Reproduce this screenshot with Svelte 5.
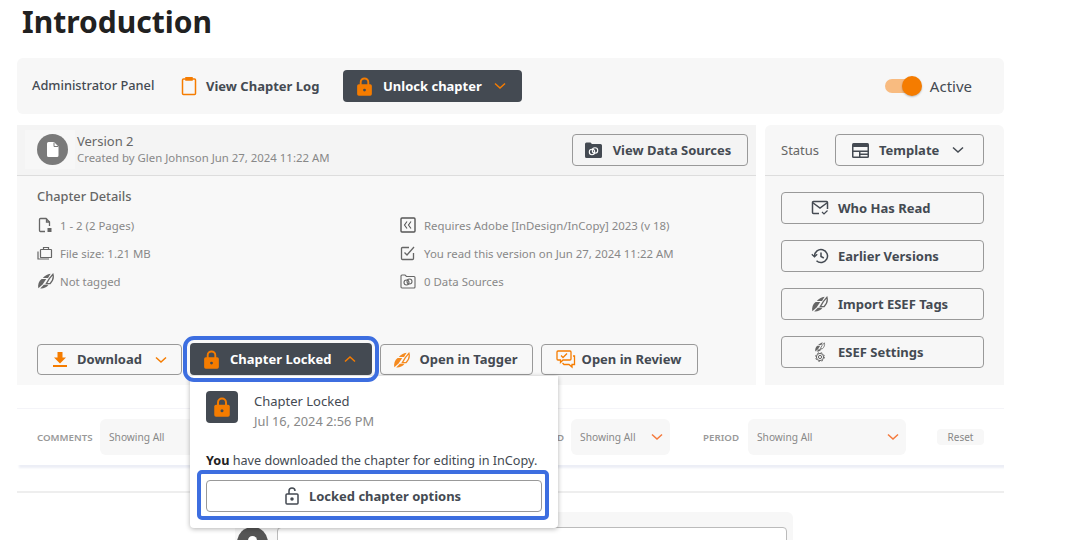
<script>
  const detailsLeft = [
    { icon: 'pages', text: '1 - 2 (2 Pages)' },
    { icon: 'size', text: 'File size: 1.21 MB' },
    { icon: 'tag', text: 'Not tagged' }
  ];
  const detailsRight = [
    { icon: 'adobe', text: 'Requires Adobe [InDesign/InCopy] 2023 (v 18)' },
    { icon: 'check', text: 'You read this version on Jun 27, 2024 11:22 AM' },
    { icon: 'folder', text: '0 Data Sources' }
  ];
  const sideActions = [
    { icon: 'mail', text: 'Who Has Read' },
    { icon: 'history', text: 'Earlier Versions' },
    { icon: 'tag', text: 'Import ESEF Tags' },
    { icon: 'esef', text: 'ESEF Settings' }
  ];
</script>

{#snippet lock(size)}
  <svg width={size} height={size} viewBox="0 0 16 16" class="lock-icon">
    <path d="M4.800 7V4.400a3.200 3.200 0 0 1 6.400 0V7" fill="none" stroke="#f57c00" stroke-width="1.600" />
    <rect x="1.800" y="6.200" width="12.400" height="9.600" rx="1.400" fill="#f57c00" />
    <circle cx="8" cy="11" r="1.200" fill="#444a52" />
  </svg>
{/snippet}

{#snippet chevron(up, color)}
  <svg width="12" height="8" viewBox="0 0 12 8" class="chevron">
    <path d={up ? 'M1 6.500L6 2l5 4.500' : 'M1 1.500L6 6l5-4.500'} fill="none" stroke={color} stroke-width="1.500" />
  </svg>
{/snippet}

{#snippet leaf(color)}
  <path d="M5.800 5C7.500 2.800 10.500 1.300 13.600.8L11 5z" fill={color} />
  <path d="M1.300 15.200C.6 11.500 1.800 8 4.600 6h4.600L5.600 11.600z" fill={color} />
  <path d="M3.200 15.400c3 .3 6.400-.8 8.300-3.700L6.800 11.800z" fill={color} />
  <path d="M12.300 5.600L15.900 1.300C16.900 4.800 15.800 8 13 10.700H9.300z" fill="none" stroke={color} stroke-width="1.300" />
{/snippet}

{#snippet tagIcon(color)}
  <svg width="18" height="16" viewBox="0 0 18 16">
    {@render leaf(color)}
  </svg>
{/snippet}

{#snippet icon(name)}
  {#if name === 'pages'}
    <svg width="16" height="16" viewBox="0 0 16 16" fill="none" stroke="#666" stroke-width="1.300">
      <path d="M8 14.500H3.500a1 1 0 0 1-1-1V2.500a1 1 0 0 1 1-1h5.500l3.500 3.500V9" />
      <path d="M9.500 1.500v3.500h3" />
      <path d="M10.500 11h4v4h-4z" fill="#666" stroke="none" />
    </svg>
  {:else if name === 'size'}
    <svg width="16" height="16" viewBox="0 0 16 16" fill="none" stroke="#666" stroke-width="1.200">
      <rect x="3.500" y="4.500" width="11" height="8" rx=".6" />
      <path d="M6.500 4.500V2.500h5v2" />
      <path d="M1 6.500v7.500h11" />
    </svg>
  {:else if name === 'tag'}
    {@render tagIcon('#666')}
  {:else if name === 'adobe'}
    <svg width="16" height="16" viewBox="0 0 16 16" fill="none" stroke="#555" stroke-width="1.400">
      <rect x="1" y="1" width="14" height="14" rx="1" />
      <path d="M7 4.500L4.500 8 7 11.500M11 4.500L8.500 8 11 11.500" stroke-width="1.100" />
    </svg>
  {:else if name === 'check'}
    <svg width="16" height="16" viewBox="0 0 16 16" fill="none" stroke="#666" stroke-width="1.300">
      <path d="M13.500 8v5.500a1 1 0 0 1-1 1h-10a1 1 0 0 1-1-1v-10a1 1 0 0 1 1-1H9" />
      <path d="M4.500 7.500L7 10l7-8" />
    </svg>
  {:else if name === 'folder'}
    <svg width="16" height="16" viewBox="0 0 16 16" fill="none" stroke="#666" stroke-width="1.100">
      <path d="M1 3a1 1 0 0 1 1-1h3l1.500 1.500H14a1 1 0 0 1 1 1V14a1 1 0 0 1-1 1H2a1 1 0 0 1-1-1z" />
      <circle cx="6.500" cy="9.500" r="2.500" />
      <circle cx="9.500" cy="8.500" r="2.500" />
    </svg>
  {:else if name === 'mail'}
    <svg width="18" height="16" viewBox="0 0 18 16" fill="none" stroke="#444a52" stroke-width="1.500">
      <path d="M8 13.500H2.500a1 1 0 0 1-1-1v-10a1 1 0 0 1 1-1h13a1 1 0 0 1 1 1V9" />
      <path d="M1.500 2.500L9 8l7.500-5.500" />
      <path d="M11 12l2 2 3.500-3.500" stroke-width="1.200" />
    </svg>
  {:else if name === 'history'}
    <svg width="18" height="16" viewBox="0 0 18 16" fill="none" stroke="#444a52" stroke-width="1.500">
      <path d="M3.500 8a6.500 6.500 0 1 1 2 4.700" />
      <path d="M.8 6.200l2.700 2.600 2.700-2.600" stroke-width="1.300" />
      <path d="M10 4.500V8.500l2.800 1.500" />
    </svg>
  {:else if name === 'esef'}
    <svg width="18" height="20" viewBox="0 0 18 20" fill="none">
      <g transform="translate(3.500 0) scale(.62)">
        {@render leaf('#666')}
      </g>
      <circle cx="9" cy="15" r="1.600" stroke="#666" stroke-width="1" />
      <circle cx="9" cy="15" r="3.600" stroke="#666" stroke-width="1" />
      <circle cx="9" cy="15" r="4.400" stroke="#666" stroke-width="1" stroke-dasharray="1.600 1.900" />
    </svg>
  {/if}
{/snippet}

<main class="page">
  <h1>Introduction</h1>

  <section class="admin-bar">
    <span class="admin-label">Administrator Panel</span>
    <span class="log-link">
      <svg width="18" height="20" viewBox="0 0 18 20" fill="none" stroke="#f57c00" stroke-width="1.500">
        <rect x="2.500" y="3" width="13" height="15.500" rx="1" />
        <path d="M6 3V1.800h6V3v1H6z" fill="#f57c00" />
      </svg>
      View Chapter Log
    </span>
    <button class="btn dark unlock">
      {@render lock(19)}
      <span>Unlock chapter</span>
      {@render chevron(false, '#f57c00')}
    </button>
    <span class="toggle-wrap">
      <span class="toggle"><span class="knob"></span></span>
      <span class="active-label">Active</span>
    </span>
  </section>

  <div class="columns">
    <section class="chapter">
      <header class="version">
        <span class="avatar-wrap">
          <span class="avatar">
            <svg width="12" height="15" viewBox="0 0 12 15"><path d="M1.500 0H7l4.500 4.500V13.500a1.500 1.500 0 0 1-1.500 1.500H1.500A1.500 1.500 0 0 1 0 13.500V1.500A1.500 1.500 0 0 1 1.500 0z" fill="#fff" /><path d="M7 .5V4.500h4" fill="none" stroke="#7a7a7a" /></svg>
          </span>
        </span>
        <div class="version-text">
          <div class="version-name">Version 2</div>
          <div class="version-meta">Created by Glen Johnson Jun 27, 2024 11:22 AM</div>
        </div>
        <button class="btn outline sources">
          <svg width="17" height="16" viewBox="0 0 17 16">
            <path d="M0 2a1.500 1.500 0 0 1 1.500-1.500h4L7 2h8.500A1.500 1.500 0 0 1 17 3.500v11a1.500 1.500 0 0 1-1.500 1.500h-14A1.500 1.500 0 0 1 0 14.500z" fill="#444a52" />
            <circle cx="7" cy="10" r="2.700" fill="none" stroke="#fff" stroke-width="1.100" />
            <circle cx="10" cy="8.500" r="2.700" fill="none" stroke="#fff" stroke-width="1.100" />
          </svg>
          View Data Sources
        </button>
      </header>

      <div class="details">
        <h2>Chapter Details</h2>
        <div class="detail-grid">
          <ul>
            {#each detailsLeft as row}
              <li><span class="detail-icon">{@render icon(row.icon)}</span>{row.text}</li>
            {/each}
          </ul>
          <ul class="right-col">
            {#each detailsRight as row}
              <li><span class="detail-icon">{@render icon(row.icon)}</span>{row.text}</li>
            {/each}
          </ul>
        </div>
        <div class="actions">
          <button class="btn outline download">
            <svg width="14" height="15" viewBox="0 0 14 15"><path d="M4.500 0h5v5.500H13L7 11.500 1 5.500h3.500zM0 13h14v2H0z" fill="#f57c00" /></svg>
            <span class="nudge">Download</span>
            {@render chevron(false, '#f57c00')}
          </button>
          <div class="locked-wrap">
            <button class="btn dark locked">
              {@render lock(19)}
              <span>Chapter Locked</span>
              {@render chevron(true, '#f57c00')}
            </button>
            <div class="popover">
              <div class="pop-head">
                <span class="pop-lock">{@render lock(20)}</span>
                <div>
                  <div class="pop-title">Chapter Locked</div>
                  <div class="pop-date">Jul 16, 2024 2:56 PM</div>
                </div>
              </div>
              <p class="pop-note"><b>You</b> have downloaded the chapter for editing in InCopy.</p>
              <div class="pop-ring">
                <button class="btn outline options">
                  <svg width="14" height="18" viewBox="0 0 14 18" fill="none" stroke="#444a52" stroke-width="1.500">
                    <path d="M4 7V4a3 3 0 0 1 6 0" />
                    <rect x="1" y="7" width="12" height="10" rx="1" />
                    <circle cx="7" cy="12" r="1" fill="#444a52" />
                  </svg>
                  Locked chapter options
                </button>
              </div>
            </div>
          </div>
          <button class="btn outline tagger">
            {@render tagIcon('#f58a1f')}
            <span class="nudge">Open in Tagger</span>
          </button>
          <button class="btn outline review">
            <svg width="20" height="19" viewBox="0 0 20 19" fill="none" stroke="#f57c00" stroke-width="1.300">
              <path d="M2 1h12a1 1 0 0 1 1 1v7a1 1 0 0 1-1 1H7l-2.500 2.500V10H2a1 1 0 0 1-1-1V2a1 1 0 0 1 1-1z" />
              <path d="M5 5.500L7 7.500l4-4" />
              <path d="M17 6h1.500v8.500H16V17l-3-2.500H8l-1.500-1.500" />
            </svg>
            <span class="nudge">Open in Review</span>
          </button>
        </div>
      </div>
    </section>

    <aside class="side">
      <header class="status">
        <span class="status-label">Status</span>
        <button class="btn outline template">
          <svg width="17" height="16" viewBox="0 0 17 16">
            <rect y="1" width="17" height="15" rx="1.500" fill="#444a52" />
            <rect x="1.500" y="5" width="14" height="3.500" fill="#f7f7f7" />
            <rect x="1.500" y="10" width="5.500" height="4.500" fill="#f7f7f7" />
            <rect x="8.500" y="10" width="7" height="1.500" fill="#f7f7f7" />
            <rect x="8.500" y="13" width="7" height="1.500" fill="#f7f7f7" />
          </svg>
          Template
          {@render chevron(false, '#444a52')}
        </button>
      </header>
      <div class="side-actions">
        {#each sideActions as action}
          <button class="btn outline side-btn">
            <span class="side-icon">{@render icon(action.icon)}</span>
            {action.text}
          </button>
        {/each}
      </div>
    </aside>
  </div>

  <section class="filters">
    <span class="filter-label">COMMENTS</span>
    <span class="select first">Showing All</span>
    <span class="filter-label pushed">ASSIGNED</span>
    <span class="select mid">Showing All {@render chevron(false, '#f5793b')}</span>
    <span class="filter-label period">PERIOD</span>
    <span class="select wide">Showing All {@render chevron(false, '#f5793b')}</span>
    <span class="reset">Reset</span>
  </section>

  <hr />

  <section class="comment-box">
    <span class="comment-avatar"><span class="comment-head"></span></span>
    <span class="comment-input"></span>
  </section>
</main>

<style>
  :global(body) {
    background: #fff;
    overflow: hidden;
  }

  .page {
    width: 987px;
    margin-left: 17px;
    height: 540px;
    overflow: hidden;
    font-family: "Noto Sans", sans-serif;
    color: #444a52;
  }

  h1 {
    margin: 0 0 0 5px;
    height: 58px;
    font-size: 30px;
    line-height: 43px;
    font-weight: 700;
    color: #212121;
  }

  .btn {
    display: flex;
    align-items: center;
    justify-content: center;
    box-sizing: border-box;
    height: 32px;
    padding: 0;
    border-radius: 4px;
    font-family: inherit;
    font-size: 13px;
    font-weight: 700;
    color: #444a52;
  }

  .btn.outline {
    background: transparent;
    border: 1px solid #999;
  }

  .btn.dark {
    justify-content: flex-start;
    gap: 9px;
    padding-left: 12px;
    background: #444a52;
    border: none;
    color: #fff;
  }

  .dark .chevron,
  .download .chevron,
  .template .chevron {
    margin-left: 3px;
  }

  .nudge {
    margin-top: -2px;
  }

  .admin-bar {
    display: flex;
    align-items: center;
    box-sizing: border-box;
    height: 56px;
    padding: 0 32px 0 15px;
    background: #f7f7f7;
    border-radius: 6px;
  }

  .admin-label {
    width: 148px;
    margin-top: -2px;
    font-size: 12.800px;
    font-weight: 500;
  }

  .log-link {
    display: flex;
    align-items: center;
    gap: 8px;
    width: 163px;
    font-size: 13px;
    font-weight: 700;
  }

  .unlock {
    width: 179px;
  }

  .toggle-wrap {
    display: flex;
    align-items: center;
    gap: 9px;
    margin-left: auto;
  }

  .toggle {
    position: relative;
    width: 36px;
    height: 14px;
    border-radius: 7px;
    background: #f8bb80;
  }

  .knob {
    position: absolute;
    right: -1px;
    top: -3px;
    width: 20px;
    height: 20px;
    border-radius: 50%;
    background: #f57c00;
    box-shadow: 0 1px 2px rgba(0, 0, 0, 0.25);
  }

  .active-label {
    font-size: 15px;
  }

  .columns {
    display: flex;
    gap: 9px;
    margin-top: 11px;
    height: 260px;
  }

  .chapter {
    flex: none;
    width: 739px;
    display: flex;
    flex-direction: column;
    background: #f8f8f8;
  }

  .version {
    display: flex;
    align-items: center;
    box-sizing: border-box;
    height: 51px;
    padding: 0 8px 1px 8px;
    background: #f4f4f4;
    border-bottom: 1px solid #ddd;
  }

  .avatar-wrap {
    display: flex;
    align-items: center;
    box-sizing: border-box;
    width: 50px;
    height: 39px;
    margin-right: 2px;
    padding-left: 12px;
    background: #f7f7f7;
  }

  .avatar {
    display: flex;
    align-items: center;
    justify-content: center;
    width: 31px;
    height: 31px;
    border-radius: 50%;
    background: #7a7a7a;
  }

  .version-name {
    margin-top: -2px;
    font-size: 13px;
    line-height: 18px;
    color: #666;
  }

  .version-meta {
    font-size: 11.400px;
    line-height: 16px;
    color: #888;
  }

  .sources {
    width: 176px;
    gap: 11px;
    margin-left: auto;
    padding-right: 4px;
  }

  .details {
    position: relative;
    flex: 1;
    padding: 10px 20px 0;
  }

  h2 {
    margin: 0;
    height: 20px;
    font-size: 12.800px;
    line-height: 20px;
    font-weight: 500;
    color: #666;
  }

  .detail-grid {
    display: flex;
    margin-top: 5px;
  }

  ul {
    flex: none;
    width: 363px;
    margin: 0;
    padding: 0;
    list-style: none;
  }

  li {
    display: flex;
    align-items: center;
    height: 28px;
    font-size: 11.400px;
    color: #888;
    white-space: nowrap;
  }

  .detail-icon {
    display: flex;
    width: 23px;
  }

  .right-col .detail-icon {
    width: 24px;
  }

  .actions {
    position: absolute;
    left: 20px;
    top: 167px;
    display: flex;
    align-items: flex-start;
    gap: 8px;
  }

  .download {
    justify-content: flex-start;
    width: 145px;
    gap: 10px;
    margin-top: 1px;
    height: 31px;
    padding-left: 15px;
  }

  .locked-wrap {
    position: relative;
  }

  .locked {
    position: relative;
    z-index: 3;
    width: 182px;
    outline: 4.500px solid #3d6ee0;
    outline-offset: 3px;
  }

  .tagger {
    width: 153px;
    gap: 8px;
    margin-top: 1px;
    height: 31px;
    padding-right: 2px;
  }

  .review {
    width: 157px;
    gap: 6px;
    margin-top: 1px;
    height: 31px;
    padding-right: 2px;
  }

  .popover {
    position: absolute;
    z-index: 2;
    left: 0;
    top: 33px;
    box-sizing: border-box;
    width: 368px;
    height: 152px;
    background: #fff;
    border-radius: 0 0 4px 4px;
    box-shadow: 0 1px 5px rgba(0, 0, 0, 0.3);
  }

  .pop-head {
    display: flex;
    gap: 16px;
    padding: 15px 16px 0;
  }

  .pop-lock {
    display: flex;
    align-items: center;
    justify-content: center;
    width: 32px;
    height: 32px;
    border-radius: 4px;
    background: #444a52;
  }

  .pop-title {
    font-size: 13px;
    line-height: 20px;
  }

  .pop-date {
    font-size: 12.800px;
    line-height: 20px;
    color: #888;
  }

  .pop-note {
    margin: 20px 0 0 16px;
    font-size: 12.650px;
    line-height: 18px;
    color: #444a52;
    white-space: nowrap;
  }

  .pop-note b {
    color: #222;
  }

  .pop-ring {
    position: absolute;
    left: 7px;
    top: 94px;
    box-sizing: border-box;
    width: 352px;
    height: 50px;
    padding: 6px 5px;
    border: 4px solid #3d6ee0;
    border-radius: 5px;
    background: #fff;
  }

  .options {
    width: 336px;
    height: 32px;
    gap: 10px;
    padding-right: 2px;
  }

  .side {
    width: 239px;
    background: #f7f7f7;
    border-radius: 6px 6px 0 0;
  }

  .status {
    display: flex;
    align-items: center;
    justify-content: space-between;
    box-sizing: border-box;
    height: 51px;
    padding: 0 20px 1px 16px;
    border-bottom: 1px solid #ddd;
  }

  .status-label {
    font-size: 13px;
    color: #666;
  }

  .template {
    justify-content: flex-start;
    width: 149px;
    gap: 10px;
    padding-left: 16px;
  }

  .side-actions {
    display: flex;
    flex-direction: column;
    gap: 16px;
    margin-top: 16px;
    padding: 0 20px 0 16px;
  }

  .side-btn {
    justify-content: flex-start;
    gap: 9px;
    padding-left: 28px;
  }

  .side-icon {
    display: flex;
    justify-content: center;
    width: 19px;
  }

  .filters {
    display: flex;
    align-items: center;
    box-sizing: border-box;
    height: 57px;
    margin-top: 23px;
    padding: 0 20px;
    border-top: 1px solid #f4f4f8;
    box-shadow: 2px 3px 2px #eceef6;
  }

  .filter-label {
    width: 63px;
    font-size: 9.700px;
    font-weight: 600;
    color: #999;
  }

  .pushed {
    width: auto;
    margin-left: auto;
    margin-right: 7px;
  }

  .period {
    width: auto;
    margin: 0 9px 0 33px;
  }

  .select {
    display: flex;
    align-items: center;
    justify-content: space-between;
    box-sizing: border-box;
    height: 36px;
    padding: 0 7px 0 9px;
    border-radius: 6px;
    background: #f7f7f7;
    font-size: 10.200px;
    color: #888;
  }

  .first {
    width: 100px;
  }

  .mid {
    width: 99px;
  }

  .wide {
    width: 158px;
  }

  .reset {
    margin-left: 31px;
    width: 47px;
    height: 16px;
    border-radius: 4px;
    background: #f7f7f7;
    font-size: 10px;
    line-height: 16px;
    text-align: center;
    color: #888;
  }

  hr {
    height: 2px;
    margin: 26px 0 0;
    border: 0;
    background: #eee;
  }

  .comment-box {
    display: flex;
    gap: 9px;
    margin: 19px 0 0 218px;
    box-sizing: border-box;
    width: 558px;
    height: 60px;
    padding: 15px 6px 0 2px;
    background: #f7f7f7;
    border-radius: 6px;
  }

  .comment-avatar {
    display: flex;
    justify-content: center;
    width: 31px;
    height: 31px;
    border-radius: 50%;
    background: #555;
  }

  .comment-head {
    width: 9px;
    height: 9px;
    margin-top: 9px;
    border-radius: 50%;
    background: #fff;
  }

  .comment-input {
    flex: 1;
    height: 40px;
    background: #fff;
    border: 1px solid #bbb;
    border-radius: 4px;
  }
</style>
